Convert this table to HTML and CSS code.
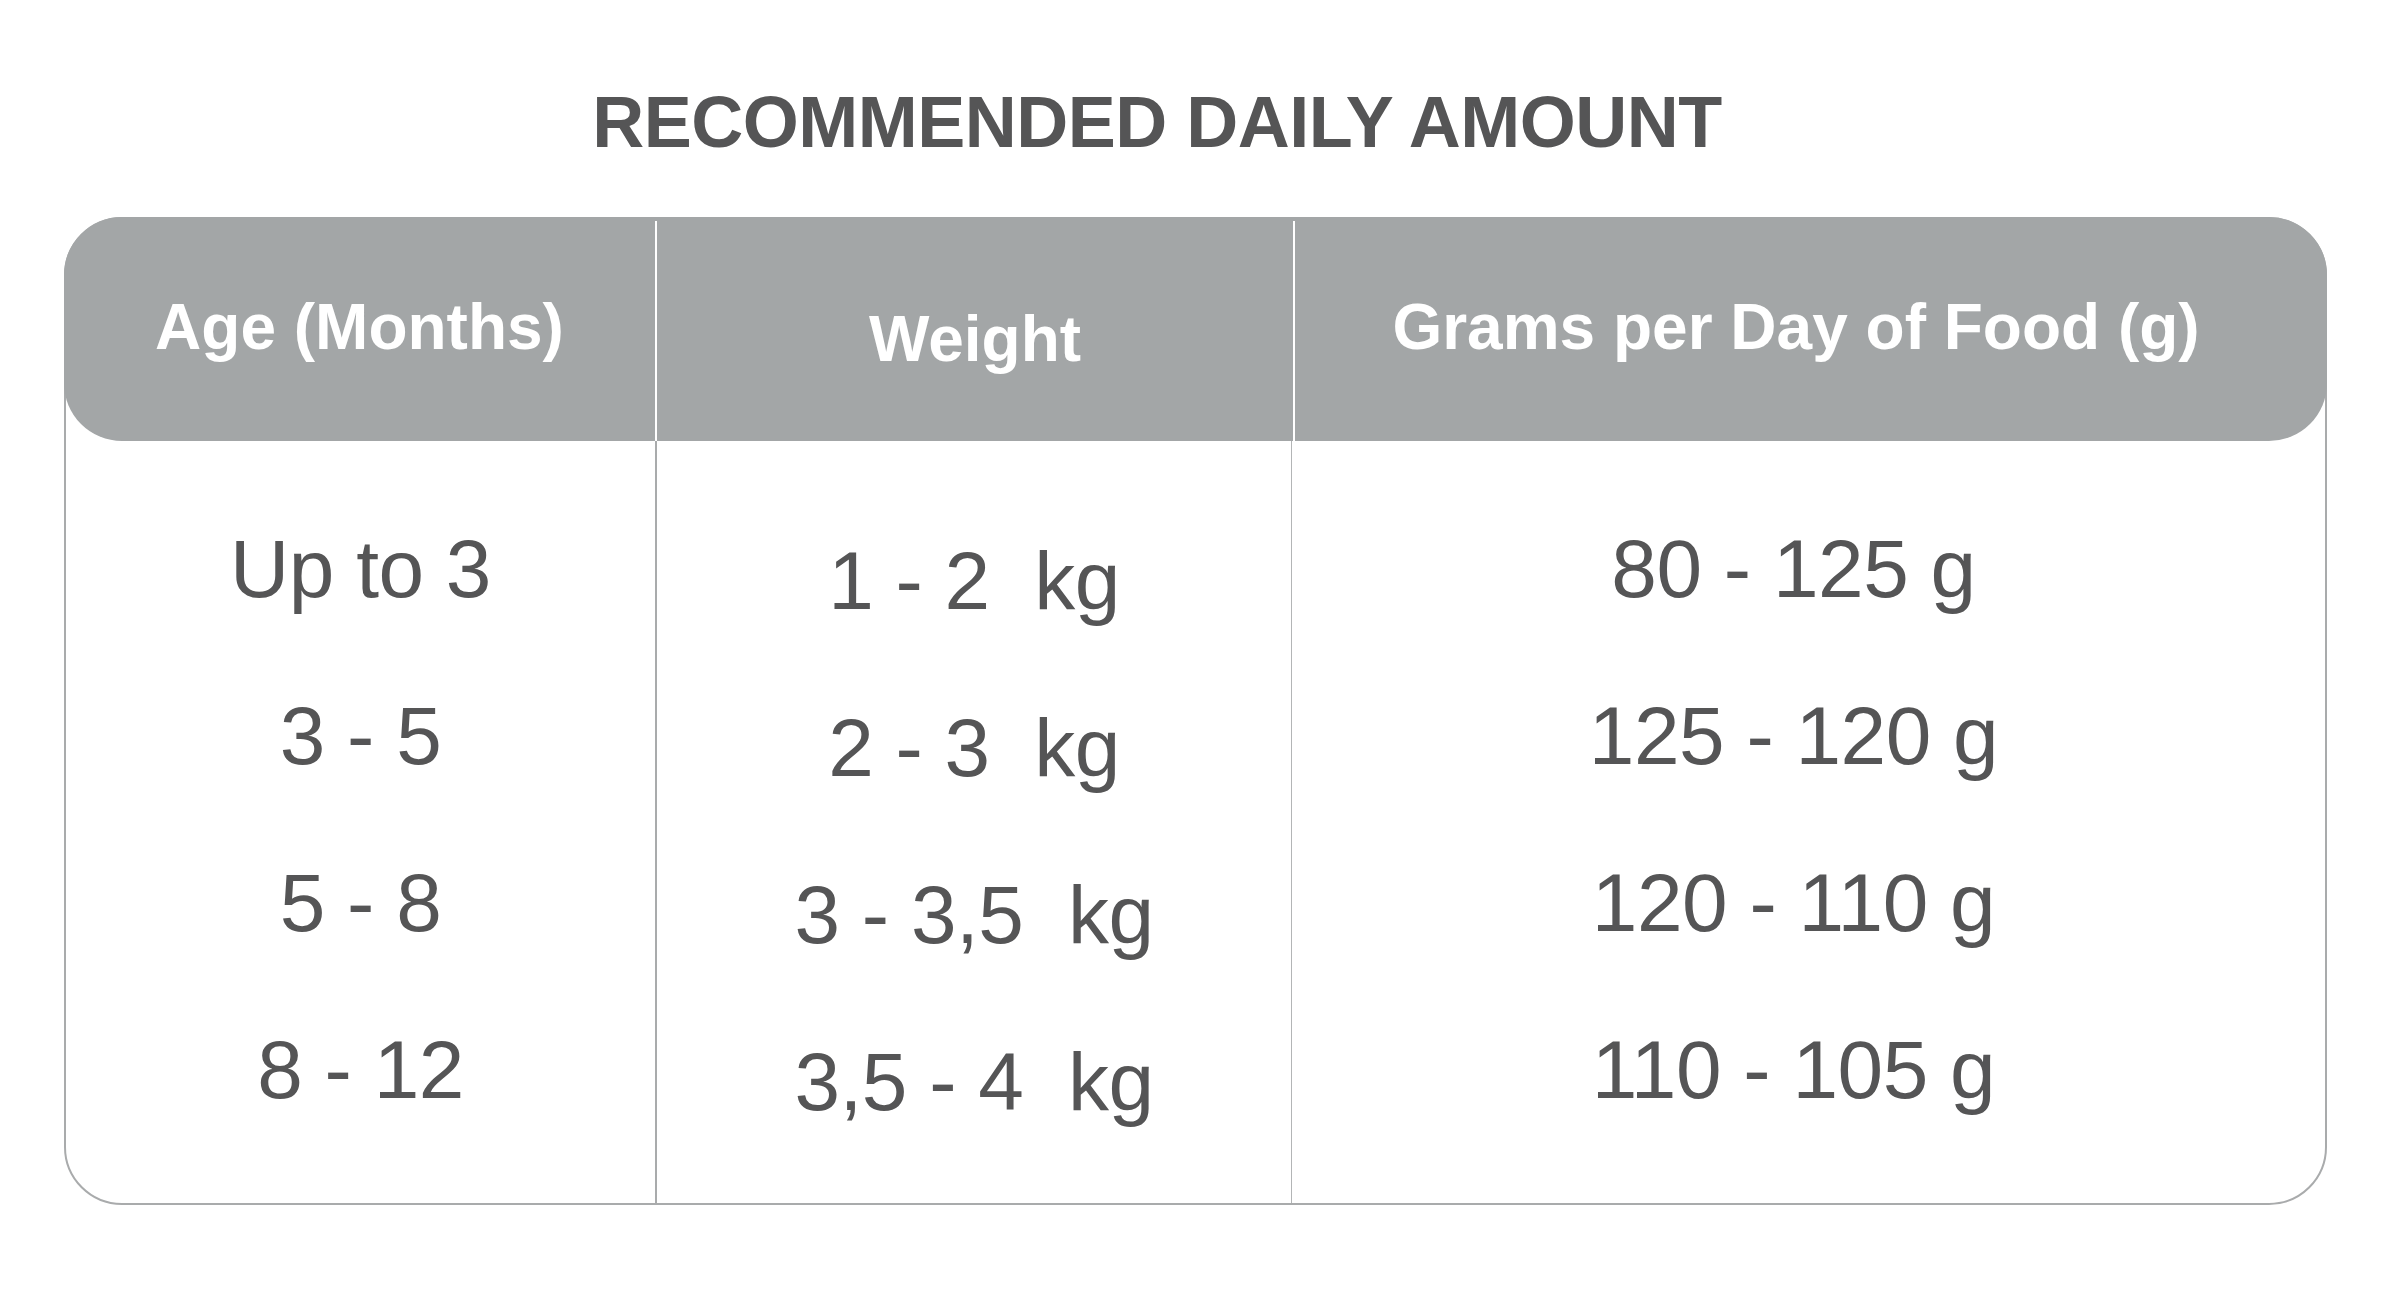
FILE: index.html
```html
<!DOCTYPE html>
<html lang="en">
<head>
<meta charset="utf-8">
<title>Recommended Daily Amount</title>
<link rel="stylesheet" href="styles.css">
</head>
<body>
<div class="page">
  <h1 class="title">RECOMMENDED DAILY AMOUNT</h1>
  <div class="table">
    <div class="head">
      <div class="hcell c1">Age (Months)</div>
      <div class="hcell c2">Weight</div>
      <div class="hcell c3">Grams per Day of Food (g)</div>
    </div>
    <div class="body">
      <div class="col c1">
        <div class="cell">Up to 3</div>
        <div class="cell">3 - 5</div>
        <div class="cell">5 - 8</div>
        <div class="cell">8 - 12</div>
      </div>
      <div class="col c2">
        <div class="cell">1 - 2&nbsp; kg</div>
        <div class="cell">2 - 3&nbsp; kg</div>
        <div class="cell">3 - 3,5&nbsp; kg</div>
        <div class="cell">3,5 - 4&nbsp; kg</div>
      </div>
      <div class="col c3">
        <div class="cell">80 - 125 g</div>
        <div class="cell">125 - 120 g</div>
        <div class="cell">120 - 110 g</div>
        <div class="cell">110 - 105 g</div>
      </div>
    </div>
  </div>
</div>
</body>
</html>
```
FILE: styles.css
```css
html, body {
  margin: 0;
  padding: 0;
  background: #ffffff;
}

.page {
  width: 2400px;
  font-family: "Liberation Sans", Arial, Helvetica, sans-serif;
  color: #555556;
}

.title {
  margin: 0;
  padding: 86px 86px 0 0;
  font-size: 72px;
  line-height: 72px;
  font-weight: bold;
  text-align: center;
  color: #555556;
  letter-spacing: -0.5px;
}

.table {
  margin: 59px 0 0 64px;
  width: 2263px;
  box-sizing: border-box;
  border: 2px solid #a9abac;
  border-radius: 58px;
  height: 988px;
  display: flex;
  flex-direction: column;
}

.head {
  margin: -2px -2px 0 -2px;
  height: 224px;
  background: #a3a6a7;
  border-radius: 58px;
  display: grid;
  grid-template-columns: 591px 638px 1fr;
  color: #ffffff;
  font-weight: bold;
  font-size: 64px;
  line-height: 64px;
  letter-spacing: 0;
}

.hcell {
  text-align: center;
  padding-top: 78px;
}

.hcell.c2,
.hcell.c3 {
  border-left: 2px solid #ffffff;
  margin-top: 4px;
  padding-top: 74px;
}

.hcell.c2 {
  padding-top: 86px;
}

.hcell.c3 {
  padding-right: 30px;
}

.body {
  flex: 1;
  display: grid;
  grid-template-columns: 589px 636px 1fr;
  font-size: 82px;
  line-height: 167px;
  letter-spacing: -0.5px;
}

.col {
  display: flex;
  flex-direction: column;
  padding-top: 44px;
  text-align: center;
}

.col.c2 {
  position: relative;
  border-left: 2px solid #a9abac;
  padding-top: 56px;
}

.col.c2::after {
  content: "";
  position: absolute;
  left: -2px;
  bottom: -6px;
  width: 2px;
  height: 6px;
  background: #a9abac;
}

.col.c3 {
  border-left: 1px solid #b3b5b6;
  padding-right: 30px;
}

.cell {
  height: 167px;
}
```
